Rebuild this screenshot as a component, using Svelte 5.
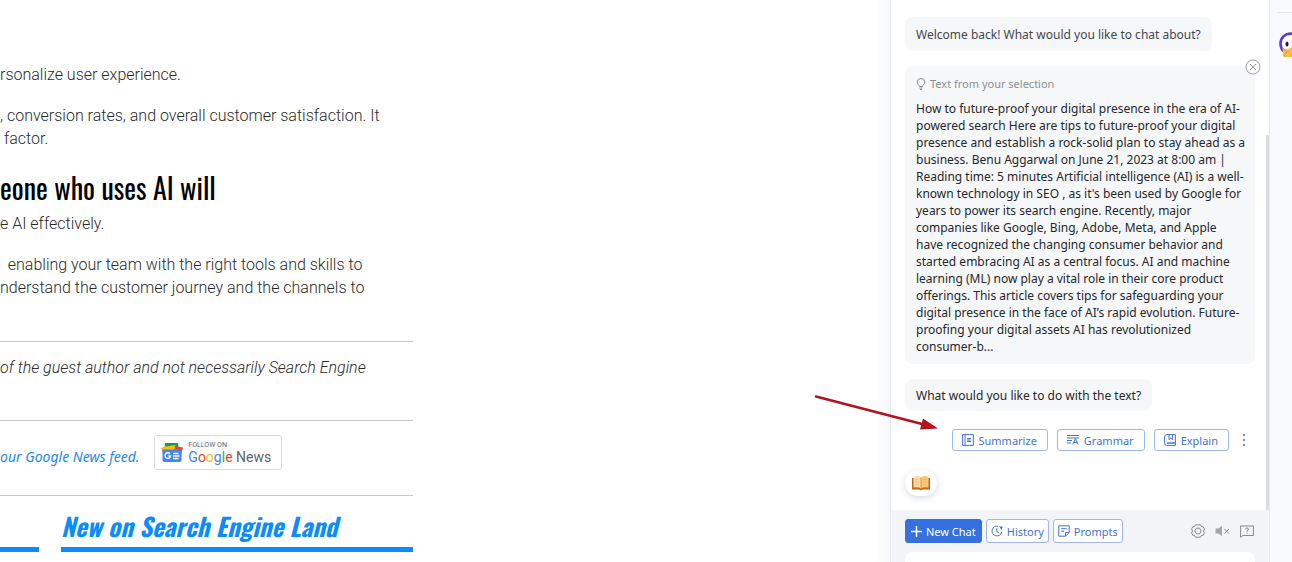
<!--
  Article page with the chat assistant docked on the right
-->
<script lang="ts">
	const selection = [
		'How to future-proof your digital presence in the era of AI-',
		'powered search Here are tips to future-proof your digital',
		'presence and establish a rock-solid plan to stay ahead as a',
		'business. Benu Aggarwal on June 21, 2023 at 8:00 am |',
		'Reading time: 5 minutes Artificial intelligence (AI) is a well-',
		"known technology in SEO , as it's been used by Google for",
		'years to power its search engine. Recently, major',
		'companies like Google, Bing, Adobe, Meta, and Apple',
		'have recognized the changing consumer behavior and',
		'started embracing AI as a central focus. AI and machine',
		'learning (ML) now play a vital role in their core product',
		'offerings. This article covers tips for safeguarding your',
		'digital presence in the face of AI’s rapid evolution. Future-',
		'proofing your digital assets AI has revolutionized',
		'consumer-b...'
	].join('\n');
</script>

<div class="page">
	<main class="article">
		<div class="column">
			<div class="prose">
				<p>rsonalize user experience.</p>
				<p>, conversion rates, and overall customer satisfaction. It<br />&nbsp;factor.</p>
				<h2>eone who uses AI will</h2>
				<p class="after-heading">e AI effectively.</p>
				<p>&nbsp; enabling your team with the right tools and skills to<br />nderstand the customer journey and the channels to</p>
			</div>
			<p class="disclaimer">of the guest author and not necessarily Search Engine</p>
			<div class="feed">
				<a class="feed-link" href="#feed">our Google News feed.</a>
				<a class="news-badge" href="#news">
					<svg width="24" height="22" viewBox="0 0 24 22" aria-hidden="true">
						<path d="M5 1h13l1 9H4z" fill="#0f9d58" />
						<path d="M1 6l5-2 2 10-4 2z" fill="#fbbc04" />
						<path d="M6 4.500l9-1.500 2 5H6z" fill="#fbbc04" />
						<path d="M15 4l8 1.500-3 11-6-6z" fill="#ea4335" />
						<path d="M2.500 7.500h19V18a2 2 0 0 1-2 2h-15a2 2 0 0 1-2-2z" fill="#4285f4" />
						<path d="M10 11.800a2.800 2.800 0 1 0 .6 2.200H8.300M13 11.500h5.500M13 14h6.500M13 16.500h5.500" fill="none" stroke="#fff" stroke-width="1.400" />
					</svg>
					<span class="badge-text">
						<small>FOLLOW ON</small>
						<span class="brand"><b class="b">G</b><b class="r">o</b><b class="y">o</b><b class="b">g</b><b class="g">l</b><b class="r">e</b> News</span>
					</span>
				</a>
			</div>
			<div class="sections">
				<div class="section-bar"></div>
				<h3>New on Search Engine Land</h3>
			</div>
		</div>
	</main>

	<aside class="chat">
		<div class="messages">
			<p class="bubble muted">Welcome back! What would you like to chat about?</p>

			<section class="selection">
				<button class="close" aria-label="Close">
					<svg width="16" height="16" viewBox="0 0 16 16">
						<circle cx="8" cy="8" r="7" />
						<path d="M5 5l6 6M11 5l-6 6" />
					</svg>
				</button>
				<h4>
					<svg width="10" height="12" viewBox="0 0 10 12" aria-hidden="true">
						<path d="M3.500 8.500C3.500 7 1.200 6.400 1.200 4a3.800 3.500 0 0 1 7.600 0c0 2.400-2.300 3-2.300 4.500zM3.500 10h3M4 11.500h2" />
					</svg>
					Text from your selection
				</h4>
				<p>{selection}</p>
			</section>

			<p class="bubble">What would you like to do with the text?</p>

			<div class="actions">
				<button>
					<svg width="12" height="12" viewBox="0 0 12 12" aria-hidden="true">
						<path d="M.6.6h10.800v10.800H.6zM3 .6v10.800M5 4.500h4M5 6h4M5 7.500h4" />
					</svg>
					Summarize
				</button>
				<button>
					<svg width="12" height="12" viewBox="0 0 12 12" aria-hidden="true">
						<path d="M0 1.500h12M0 4h12M0 6.500h5M0 9h4M5.800 10.500l2.600-6 2.600 6M6.800 8.500h3.400" />
					</svg>
					Grammar
				</button>
				<button>
					<svg width="12" height="12" viewBox="0 0 12 12" aria-hidden="true">
						<path d="M3 .6h8.400v8.400H3M3 .6Q.6.6.6 3v6.500a2 2 0 0 0 2 1.900h8.800V9H2.600M5 .6v5l1.800-1.500L8.600 5.600v-5" />
					</svg>
					Explain
				</button>
				<button class="more" aria-label="More actions">
					<svg width="4" height="14" viewBox="0 0 4 14">
						<path d="M1 1h2v2H1zM1 6h2v2H1zM1 11h2v2H1z" />
					</svg>
				</button>
			</div>

			<div class="book">
				<svg width="20" height="16" viewBox="0 0 20 16" aria-hidden="true">
					<path d="M1 3h18v11.500h-7l-2 1-2-1H1z" fill="#bd6b20" />
					<path d="M2.500 2Q7-.2 10 2.500v11Q7 11.500 2.500 12.500z" fill="#ffdda0" />
					<path d="M10 2.500Q13-.2 17.500 2v10.500Q13 11.500 10 13.500z" fill="#ffc777" />
					<path d="M10 2.500v11" fill="none" stroke="#d98a35" stroke-width=".8" />
					<path d="M4 4.500q2-.8 4 .2M4 7q2-.8 4 .2M4 9.500q2-.8 4 .2M12 4.700q2-1 4-.2M12 7.200q2-1 4-.2M12 9.700q2-1 4-.2" fill="none" stroke="#eeb066" stroke-width=".6" />
				</svg>
			</div>
			<span class="thumb"></span>
		</div>

		<footer>
			<div class="toolbar">
				<button class="primary">
					<svg width="11" height="11" viewBox="0 0 11 11" aria-hidden="true">
						<path d="M5.500 0v11M0 5.500h11" />
					</svg>
					New Chat
				</button>
				<button>
					<svg width="12" height="12" viewBox="0 0 12 12" aria-hidden="true">
						<path d="M7 1.200A4.900 4.900 0 1 0 10.700 7M5.800 3.200v3.300l2.400 1.600" />
						<path d="M8 1.200l3.700.6-1.200 3.200z" fill="currentColor" stroke="none" />
					</svg>
					History
				</button>
				<button>
					<svg width="12" height="12" viewBox="0 0 12 12" aria-hidden="true">
						<path d="M7.500 11.200H.8V.8h10.400v6.700zM7.500 11.200V7.500h3.700M3.200 3.700h5.600M3.200 6.200h3" />
					</svg>
					Prompts
				</button>
				<div class="tools">
					<button aria-label="Settings">
						<svg width="14" height="14" viewBox="0 0 14 14">
							<path d="M4.500.8h5l1.100 1.900h1.600L13.400 5l-.9 2 .9 2-1.200 2.300h-1.600l-1.100 1.900h-5l-1.100-1.900H1.800L.6 9l.9-2-.9-2 1.200-2.300h1.600z" />
							<path d="M5.400 4.200h3.200L10.200 7 8.600 9.800H5.400L3.800 7z" />
						</svg>
					</button>
					<button aria-label="Mute">
						<svg width="15" height="12" viewBox="0 0 15 12">
							<path class="solid" d="M.5 3.500h2.800L7 1v10L3.300 8.500H.5z" />
							<path d="M9.500 4l4.500 4.500M14 4L9.500 8.500" />
						</svg>
					</button>
					<button aria-label="Help">
						<svg width="14" height="13" viewBox="0 0 14 13">
							<path d="M.6 1h12.800v9.500H3L.6 12.300zM5.500 4.300Q5.500 3 7 3t1.500 1.200Q8.500 5 7 5.800v.8M7 7.600v1" />
						</svg>
					</button>
				</div>
			</div>
			<div class="composer"></div>
		</footer>
	</aside>

	<nav class="rail" aria-label="Assistant">
		<hr />
		<svg width="13" height="26" viewBox="0 0 13 26" aria-hidden="true">
			<path d="M13 2.500C6 1.500 2 7 2 11.500c0 4 1.500 6.500 4 8h7" fill="#fff" />
			<path d="M13 1.800C6 .8 1.500 6 1.500 11.500c0 3.500 1.200 6 3 7.500" fill="none" stroke="#5a3be0" stroke-width="2.600" />
			<ellipse cx="8" cy="12" rx="1.500" ry="2.600" fill="#1d1730" />
			<path d="M3.500 16l5 1.500L13 15v10H4.500z" fill="#f9bd45" />
			<path d="M3.500 16l5 4M4.500 24l4-4" stroke="#e09832" fill="none" />
		</svg>
	</nav>

	<svg class="pointer" width="124" height="38" viewBox="0 0 124 38" aria-hidden="true">
		<path d="M2 2.500l106 27.500" stroke="#b5121b" stroke-width="2.500" stroke-linecap="round" />
		<path d="M109 24.500l15 10-18 1z" fill="#b5121b" />
	</svg>
</div>

<style>
	:global(body) {
		overflow: hidden;
		background: #fff;
	}

	.page {
		position: relative;
		display: grid;
		grid-template-columns: 1fr 380px 22px;
		height: 100vh;
		font-family: 'Noto Sans', 'Open Sans', sans-serif;
	}

	p,
	h2,
	h3,
	h4,
	hr {
		margin: 0;
	}

	svg {
		flex-shrink: 0;
	}

	button {
		display: inline-flex;
		align-items: center;
		box-sizing: border-box;
		padding: 0;
		border: 0;
		background: none;
		font: inherit;
		white-space: nowrap;
	}

	/* Article */
	.article {
		background: linear-gradient(to left, #f6f7f9, #fff 14px);
	}

	.column {
		max-width: 413px;
		font-family: Roboto, sans-serif;
		font-size: 16px;
		font-weight: 300;
		line-height: 23px;
		color: #2a2a2a;
		white-space: nowrap;
	}

	.prose {
		display: flex;
		flex-direction: column;
		gap: 18px;
		padding: 63px 0 42px;
		border-bottom: 1px solid #c8c8c8;
	}

	h2 {
		margin-top: 2px;
		font-family: Oswald, 'Roboto Condensed', 'Liberation Sans Narrow', sans-serif;
		font-size: 28px;
		font-weight: 400;
		line-height: 36px;
		color: #000;
	}

	.after-heading {
		margin-top: -12px;
	}

	.disclaimer {
		padding: 14px 0 41px;
		border-bottom: 1px solid #c8c8c8;
		font-style: italic;
	}

	.feed {
		display: flex;
		align-items: center;
		gap: 15px;
		padding: 14px 0 25px;
		border-bottom: 1px solid #c8c8c8;
	}

	.feed-link {
		padding-top: 7px;
		font-family: 'Noto Sans', sans-serif;
		font-size: 14px;
		font-style: italic;
		font-weight: 400;
		color: #2388e8;
		text-decoration: none;
	}

	.news-badge {
		display: flex;
		align-items: center;
		gap: 4px;
		padding: 0 10px 0 5px;
		height: 33px;
		border: 1px solid #dadce0;
		border-radius: 3px;
		color: #5f6368;
		text-decoration: none;
	}

	.badge-text {
		display: flex;
		flex-direction: column;
		padding-top: 2px;
		font-weight: 400;
	}

	small {
		font-size: 7px;
		line-height: 8px;
	}

	.brand {
		font-size: 14px;
		line-height: 17px;
	}

	.brand b {
		font-weight: 400;
	}

	.b {
		color: #4285f4;
	}

	.r {
		color: #ea4335;
	}

	.y {
		color: #fbbc04;
	}

	.g {
		color: #34a853;
	}

	.sections {
		display: grid;
		grid-template-columns: 39px 1fr;
		gap: 22px;
		padding-top: 12px;
	}

	.section-bar,
	h3 {
		border-bottom: 5px solid #0a8cff;
	}

	h3 {
		padding-bottom: 3px;
		font-family: Oswald, 'Roboto Condensed', 'Liberation Sans Narrow', sans-serif;
		font-size: 25px;
		font-style: italic;
		font-weight: 700;
		line-height: 36px;
		color: #0a8cff;
	}

	/* Chat panel */
	.chat {
		display: flex;
		flex-direction: column;
		min-height: 0;
		border-left: 1px solid #e6e8ec;
		border-right: 1px solid #e6e8ec;
		box-sizing: border-box;
		background: #fff;
		font-size: 12px;
		line-height: 17px;
		color: #26282c;
	}

	.messages {
		position: relative;
		display: flex;
		flex: 1;
		flex-direction: column;
		align-items: flex-start;
		min-height: 0;
		padding: 17px 14px 0;
	}

	.bubble {
		padding: 8px 11px 7px;
		border-radius: 8px;
		background: #f6f7f9;
	}

	.muted {
		padding: 9px 11px 8px;
		color: #44474d;
	}

	.selection {
		position: relative;
		align-self: stretch;
		margin: 15px 0;
		padding: 9px 11px;
		border-radius: 8px;
		background: #f6f7f9;
	}

	.selection p {
		margin-top: 8px;
		white-space: pre;
	}

	h4 {
		display: flex;
		align-items: center;
		gap: 4px;
		font-size: 11px;
		font-weight: 400;
		color: #8b9097;
	}

	h4 svg {
		fill: none;
		stroke: #8b9097;
	}

	.close {
		position: absolute;
		top: -7px;
		right: -6px;
	}

	.close svg {
		fill: #fff;
		stroke: #9a9ea5;
	}

	.actions {
		display: flex;
		align-self: stretch;
		justify-content: flex-end;
		gap: 9px;
		margin-top: 18px;
		padding-right: 9px;
	}

	.actions button,
	.toolbar > button {
		gap: 5px;
		height: 22px;
		padding: 0 10px 0 9px;
		border: 1px solid #9db8ee;
		border-radius: 3px;
		background: #fff;
		font-size: 11px;
		color: #4573d2;
	}

	.actions svg,
	.toolbar > button svg {
		fill: none;
		stroke: currentColor;
	}

	.actions .more {
		margin-left: 4px;
		padding: 0;
		border: 0;
	}

	.more path {
		fill: #6b90dd;
		stroke: none;
	}

	.book {
		display: flex;
		align-items: center;
		justify-content: center;
		width: 32px;
		height: 26px;
		margin-top: 19px;
		border-radius: 13px;
		box-shadow: 0 2px 6px rgba(60, 70, 90, 0.2);
	}

	.thumb {
		position: absolute;
		top: 135px;
		right: 0;
		bottom: 0;
		width: 3px;
		background: #dcdee2;
	}

	/* Footer toolbar */
	footer {
		padding: 9px 14px 0;
		background: #f3f4f7;
	}

	.toolbar {
		display: flex;
		align-items: center;
		gap: 4px;
	}

	.toolbar > button {
		gap: 4px;
		height: 24px;
		padding: 0 4px;
	}

	.toolbar > .primary {
		padding: 0 5px;
		border-color: #3570e0;
		background: #3570e0;
		color: #fff;
	}

	.primary path {
		stroke-width: 1.5;
	}

	.tools {
		display: flex;
		align-items: center;
		gap: 10px;
		margin-left: auto;
		padding-right: 1px;
	}

	.tools svg {
		fill: none;
		stroke: #85888e;
	}

	.tools .solid {
		fill: #a4a7ac;
		stroke: none;
	}

	.composer {
		height: 10px;
		margin-top: 9px;
		border-radius: 8px 8px 0 0;
		background: #fff;
	}

	.rail {
		overflow: hidden;
		background: #f8fafd;
	}

	.rail hr {
		margin: 12px 0 19px 7px;
		border: 0;
		border-top: 1px solid #e3e6eb;
	}

	.rail svg {
		display: block;
		margin-left: auto;
	}

	/* Callout arrow over the page */
	.pointer {
		position: absolute;
		top: 394px;
		right: 354px;
	}
</style>
